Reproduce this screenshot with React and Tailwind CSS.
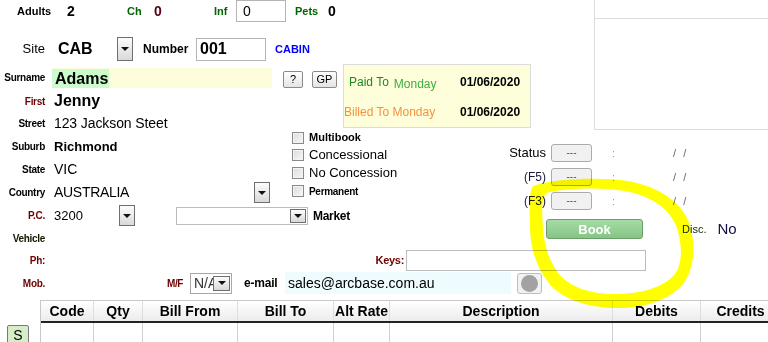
import clsx from 'clsx'

const LBL = 'flex items-center justify-end pr-[7px] text-[10px] font-bold tracking-[-0.3px]'
const MAROON = 'text-[#6e0000]'

function Drop({ className }) {
  return (
    <div className={clsx('flex items-center justify-center border border-[#6f6f6f] bg-linear-to-b from-[#fcfcfc] to-[#d9d9d9]', className)}>
      <svg width="8" height="4" viewBox="0 0 8 4"><path d="M0 0h8L4 4z" fill="#111" /></svg>
    </div>
  )
}

function Check({ label, className }) {
  return (
    <div className="flex items-center h-full">
      <span className="w-[12px] h-[12px] border border-[#8a8a8a] bg-linear-to-br from-[#dcdcdc] to-[#f7f7f7] shadow-[inset_0_0_0_1px_#f4f4f4]" />
      <span className={clsx('ml-[5px] whitespace-nowrap', className)}>{label}</span>
    </div>
  )
}

function StatusRow({ label, small }) {
  return (
    <div className="flex items-center h-[18px]">
      <span className={clsx('w-[46px] text-right whitespace-nowrap', small ? 'text-[12px] text-[#1a1a40]' : 'text-[13px] text-black')}>{label}</span>
      <button className="ml-[5px] w-[41px] h-[18px] rounded-[3px] border border-[#ababab] bg-[#f1f1f1] text-[10px] text-[#555] leading-none">---</button>
      <span className="ml-[20px] text-[11px] text-[#999]">:</span>
      <span className="ml-[58px] text-[11px] text-[#66667a] tracking-[2px]">/ /</span>
    </div>
  )
}

const COLS = [
  ['Code', 53], ['Qty', 49], ['Bill From', 95], ['Bill To', 96],
  ['Alt Rate', 56], ['Description', 223], ['Debits', 88], ['Credits', 80],
]

export default function App() {
  return (
    <div className="relative w-[768px] h-[342px] overflow-hidden bg-white text-black font-['Liberation_Sans',Arial,sans-serif]">
      <div className="grid grid-cols-[52px_231px_60px_157px_94px_174px] grid-rows-[26px_38px_26px_22px_23px_23px_23px_23px_23px_22px_22px_24px] h-[300px]">
        {/* guests */}
        <div className="col-[1/6] row-start-1 self-start h-[22px] flex items-center font-bold">
          <span className="w-[67px] pl-[17px] text-[11px]">Adults</span>
          <span className="w-[60px] text-[14px]">2</span>
          <span className="w-[27px] text-[11px] text-[#006400]">Ch</span>
          <span className="w-[60px] text-[14px] text-[#5a0010]">0</span>
          <span className="w-[22px] text-[11px] text-[#006400]">Inf</span>
          <div className="w-[50px] h-[22px] border border-[#b4b4b4] flex items-center pl-[6px] text-[14px] font-normal">0</div>
          <span className="ml-[9px] w-[33px] text-[11px] text-[#006400]">Pets</span>
          <span className="text-[14px]">0</span>
        </div>

        {/* site */}
        <div className="col-[1/6] row-start-2 self-end mb-[3px] h-[24px] flex items-center">
          <span className="w-[52px] pr-[7px] text-right text-[13px]">Site</span>
          <span className="w-[65px] pl-[6px] text-[16px] font-bold">CAB</span>
          <Drop className="w-[16px] h-[24px]" />
          <span className="w-[63px] pl-[10px] text-[12px] font-bold">Number</span>
          <div className="w-[70px] h-[23px] border border-[#b4b4b4] flex items-center pl-[3px] text-[16px] font-bold">001</div>
          <span className="ml-[9px] text-[11px] font-bold text-[#0000ff]">CABIN</span>
        </div>

        {/* side panel */}
        <div className="col-start-6 row-[1/6] self-start h-[130px] border-l border-b border-[#dcdcdc]">
          <div className="h-[19px] border-b border-[#dcdcdc]" />
        </div>

        {/* labels */}
        <div className={clsx(LBL, 'col-start-1 row-start-3')}>Surname</div>
        <div className={clsx(LBL, MAROON, 'col-start-1 row-start-4')}>First</div>
        <div className={clsx(LBL, 'col-start-1 row-start-5')}>Street</div>
        <div className={clsx(LBL, 'col-start-1 row-start-6')}>Suburb</div>
        <div className={clsx(LBL, 'col-start-1 row-start-7')}>State</div>
        <div className={clsx(LBL, 'col-start-1 row-start-8')}>Country</div>
        <div className={clsx(LBL, MAROON, 'col-start-1 row-start-9')}>P.C.</div>
        <div className={clsx(LBL, 'col-start-1 row-start-10 text-[#101800]')}>Vehicle</div>
        <div className={clsx(LBL, MAROON, 'col-start-1 row-start-11')}>Ph:</div>
        <div className={clsx(LBL, MAROON, 'col-start-1 row-start-12')}>Mob.</div>

        {/* values */}
        <div className="col-start-2 row-start-3 self-end mb-[2px] w-[220px] h-[20px] bg-[#fdfddc] flex items-center">
          <span className="bg-[#ccfccc] pl-[3px] pr-[1px] text-[16px] font-bold leading-[19px]">Adams</span>
        </div>
        <div className="col-start-2 row-start-4 flex items-center pl-[2px] text-[16px] font-bold">Jenny</div>
        <div className="col-start-2 row-start-5 flex items-center pl-[2px] text-[14px] tracking-[-0.1px]">123 Jackson Steet</div>
        <div className="col-start-2 row-start-6 flex items-center pl-[2px] text-[13px] font-bold">Richmond</div>
        <div className="col-start-2 row-start-7 flex items-center pl-[2px] text-[14px]">VIC</div>
        <div className="col-start-2 row-start-8 flex items-center">
          <span className="w-[202px] pl-[2px] text-[14px] tracking-[-0.3px]">AUSTRALIA</span>
          <Drop className="w-[16px] h-[21px]" />
        </div>
        <div className="col-[2/5] row-start-9 flex items-center">
          <span className="w-[67px] pl-[2px] text-[13px]">3200</span>
          <Drop className="w-[16px] h-[21px]" />
          <div className="ml-[41px] w-[132px] h-[18px] border border-[#bcbcbc] flex items-center justify-end pr-[1px]">
            <Drop className="w-[16px] h-[14px]" />
          </div>
          <span className="ml-[5px] text-[12px] font-bold tracking-[-0.3px]">Market</span>
        </div>

        {/* ? GP */}
        <div className="col-start-3 row-start-3 self-end mb-[2px] flex">
          <button className="w-[20px] h-[17px] rounded-[2px] border border-[#8a8a8a] bg-linear-to-b from-white to-[#e4e4e4] text-[11px] leading-none">?</button>
          <button className="ml-[9px] w-[25px] h-[17px] rounded-[2px] border border-[#8a8a8a] bg-linear-to-b from-white to-[#e4e4e4] text-[11px] leading-none">GP</button>
        </div>

        {/* paid box */}
        <div className="col-[4/6] row-[3/6] self-start w-[188px] h-[64px] border border-[#dcdcdc] bg-[#fefedb] flex flex-col pt-[8px] text-[12px]">
          <div className="flex items-center h-[18px]">
            <span className="w-[116px] pl-[5px] whitespace-nowrap">
              <span className="text-[#1f8a1f]">Paid To</span>
              <span className="ml-[5px] relative top-[2px] text-[#3fae3f]">Monday</span>
            </span>
            <span className="font-bold">01/06/2020</span>
          </div>
          <div className="flex items-center h-[18px] mt-[12px]">
            <span className="w-[116px] whitespace-nowrap text-[#f5913e]">Billed To Monday</span>
            <span className="font-bold">01/06/2020</span>
          </div>
        </div>

        {/* checkboxes */}
        <div className="col-[3/5] row-[6/10] self-start -mt-[6px] pl-[9px] flex flex-col">
          <div className="h-[17px]"><Check label="Multibook" className="text-[11px] font-bold" /></div>
          <div className="h-[18px]"><Check label="Concessional" className="text-[13px]" /></div>
          <div className="h-[18px]"><Check label="No Concession" className="text-[13px]" /></div>
          <div className="h-[18px]"><Check label="Permanent" className="text-[10px] font-bold tracking-[-0.3px]" /></div>
        </div>

        {/* status */}
        <div className="col-[5/7] row-[6/11] self-start pt-[9px] flex flex-col gap-[6px]">
          <StatusRow label="Status" />
          <StatusRow label="(F5)" small />
          <StatusRow label="(F3)" small />
          <div className="mt-[3px] flex items-center h-[20px]">
            <button className="ml-[46px] w-[97px] h-[20px] rounded-[3px] border border-[#6c9e6c] bg-linear-to-b from-[#a6dca6] to-[#86c486] text-white text-[13px] font-bold">Book</button>
            <span className="ml-[39px] text-[11px] text-[#0a2a0a]">Disc.</span>
            <span className="ml-[11px] text-[15px] text-[#101040]">No</span>
          </div>
        </div>

        {/* keys */}
        <div className="col-[2/7] row-start-11 flex items-center">
          <span className={clsx('w-[354px] pr-[2px] text-right text-[11px] font-bold tracking-[-0.3px]', MAROON)}>Keys:</span>
          <div className="w-[240px] h-[21px] border border-[#bcbcbc]" />
        </div>

        {/* mob row */}
        <div className="col-[2/7] row-start-12 flex items-center">
          <span className={clsx('w-[131px] text-right text-[10px] font-bold tracking-[-0.4px]', MAROON)}>M/F</span>
          <div className="relative ml-[7px] w-[42px] h-[21px] border border-[#a8a8a8] flex items-center pl-[3px]">
            <span className="whitespace-nowrap text-[14px] text-[#333]">N/A</span>
            <Drop className="absolute right-[1px] top-[2px] w-[17px] h-[15px]" />
          </div>
          <span className="w-[53px] pl-[12px] text-[12px] font-bold tracking-[-0.2px]">e-mail</span>
          <div className="w-[226px] h-[22px] bg-[#eefbff] flex items-center pl-[3px] text-[14px]">sales@arcbase.com.au</div>
          <div className="ml-[6px] w-[25px] h-[21px] rounded-[3px] border border-[#bdbdbd] bg-[#f2f2f2] flex items-center justify-center">
            <span className="w-[17px] h-[17px] rounded-full bg-[#a2a2a2]" />
          </div>
        </div>
      </div>

      {/* grid table */}
      <div className="flex">
        <div className="w-[40px] shrink-0 pt-[23px] pl-[7px]">
          <button className="w-[22px] h-[20px] rounded-[2px] border border-[#7a7a7a] bg-[#d6eec8] text-[14px] leading-none">S</button>
        </div>
        <div className="flex-1 min-w-0 overflow-hidden border-l border-[#c8c8c8]">
          <div className="flex h-[23px] border-t border-[#c8c8c8] border-b-2 border-b-[#222] bg-linear-to-b from-white to-[#ececec]">
            {COLS.map(([name, w]) => (
              <div key={name} style={{ width: w }} className="shrink-0 flex items-center justify-center border-r border-[#dedede] text-[14px] font-bold whitespace-nowrap">
                {name}
              </div>
            ))}
          </div>
          <div className="flex h-[30px]">
            {COLS.map(([name, w]) => (
              <div key={name} style={{ width: w }} className="shrink-0 border-r border-[#d0d0d0]" />
            ))}
          </div>
        </div>
      </div>

      {/* highlighter annotation */}
      <svg className="absolute inset-0 pointer-events-none mix-blend-multiply" width="768" height="342" viewBox="0 0 768 342">
        <path
          fillRule="evenodd"
          fill="#ffff00"
          d="M533 186 C555 178, 600 177, 628 181 C660 187, 683 203, 690 225 C696 248, 694 268, 684 283 C668 302, 640 309, 613 308 C585 307, 560 298, 548 282 C535 265, 530 245, 530 226 C530 208, 528 194, 533 186 Z M546 193 C565 188, 600 187, 625 191 C652 196, 670 209, 677 228 C683 248, 682 264, 675 274 C662 289, 638 294, 614 294 C590 294, 570 287, 559 274 C548 260, 544 244, 543 227 C542 212, 541 200, 546 193 Z"
        />
      </svg>
    </div>
  )
}
